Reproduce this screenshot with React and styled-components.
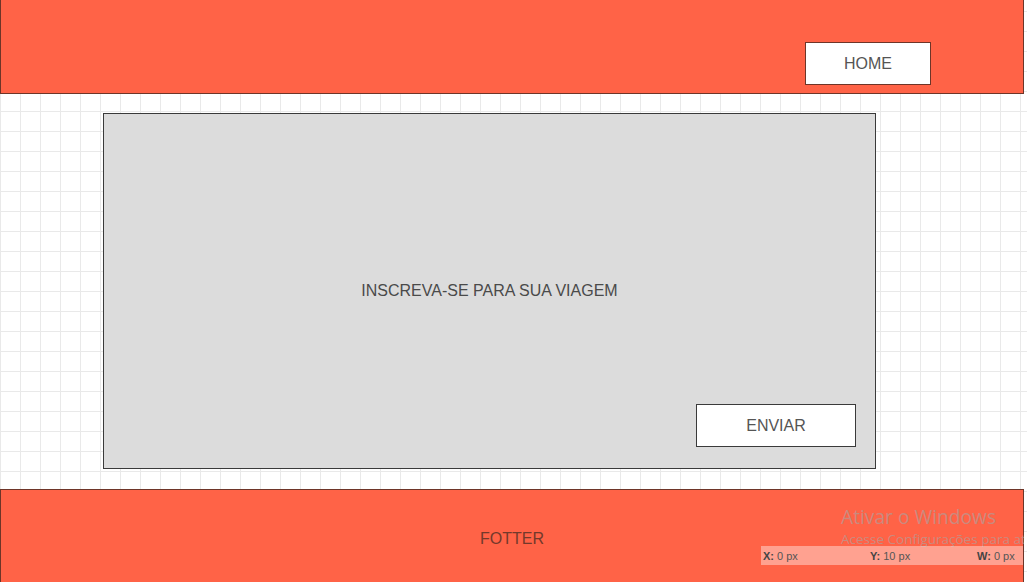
import styled, { createGlobalStyle } from 'styled-components';

const GlobalStyle = createGlobalStyle`
    html, body {
        margin: 0;
        padding: 0;
    }

    body {
        overflow: hidden;
        font-family: "Liberation Sans", Arial, sans-serif;
        background-color: #ffffff;
        background-image:
            linear-gradient(to right, #e9e9e9 1px, transparent 1px),
            linear-gradient(to bottom, #e9e9e9 1px, transparent 1px);
        background-size: 20px 20px;
        background-position: 0 11px;
    }
`;

const Page = styled.div`
    position: relative;
    width: 1024px;
    height: 582px;
    display: flex;
    flex-direction: column;
    overflow: hidden;
`;

const Header = styled.header`
    box-sizing: border-box;
    height: 94px;
    flex-shrink: 0;
    background: #ff6347;
    border: 1px solid #6e3528;
    border-top: none;
    display: flex;
    justify-content: flex-end;
    align-items: flex-end;
    padding: 0 92px 8px 0;
`;

const Button = styled.button`
    box-sizing: border-box;
    width: ${(props) => props.w}px;
    height: 43px;
    background: #ffffff;
    border: 1px solid ${(props) => (props.dark ? '#3a3a3a' : '#6e3528')};
    border-radius: 0;
    font-family: inherit;
    font-size: 16px;
    color: #555555;
    padding: 0;
    cursor: pointer;
`;

const Main = styled.main`
    flex: 1;
    padding: 19px 0 20px 103px;
`;

const Panel = styled.section`
    box-sizing: border-box;
    width: 773px;
    height: 356px;
    background: #dcdcdc;
    border: 1px solid #3a3a3a;
    display: grid;
    grid-template-areas: 'stack';
`;

const Title = styled.p`
    grid-area: stack;
    margin: 0;
    justify-self: center;
    align-self: center;
    font-size: 16px;
    color: #4a4a4a;
`;

const SendArea = styled.div`
    grid-area: stack;
    justify-self: end;
    align-self: end;
    margin: 0 19px 21px 0;
`;

const Footer = styled.footer`
    box-sizing: border-box;
    height: 98px;
    flex-shrink: 0;
    background: #ff6347;
    border: 1px solid #6e3528;
    border-bottom: none;
    display: flex;
    justify-content: center;
    align-items: center;
    font-size: 16px;
    color: #73392b;
`;

const Watermark = styled.div`
    position: absolute;
    left: 841px;
    top: 505px;
    white-space: nowrap;
    font-family: "Open Sans", "Noto Sans", sans-serif;
    color: rgba(165, 165, 165, 0.6);
`;

const WatermarkTitle = styled.div`
    font-size: 19.2px;
    line-height: 24px;
`;

const WatermarkText = styled.div`
    font-size: 13.5px;
    line-height: 20px;
`;

const CoordBar = styled.div`
    position: absolute;
    left: 761px;
    top: 546px;
    width: 262px;
    height: 19px;
    background: rgba(255, 255, 255, 0.4);
    display: flex;
    align-items: center;
    justify-content: space-between;
    padding: 0 8px 0 2px;
    box-sizing: border-box;
    font-size: 11px;
    color: #555555;
`;

const Coord = styled.span`
    width: ${(props) => props.w}px;

    b {
        color: #444444;
    }
`;

const App = () => {
    return (
        <>
            <GlobalStyle />
            <Page>
                <Header>
                    <Button w={126}>HOME</Button>
                </Header>
                <Main>
                    <Panel>
                        <Title>INSCREVA-SE PARA SUA VIAGEM</Title>
                        <SendArea>
                            <Button w={160} dark>ENVIAR</Button>
                        </SendArea>
                    </Panel>
                </Main>
                <Footer>FOTTER</Footer>
                <Watermark>
                    <WatermarkTitle>Ativar o Windows</WatermarkTitle>
                    <WatermarkText>Acesse Configurações para ativar o Windows.</WatermarkText>
                </Watermark>
                <CoordBar>
                    <Coord w={105}><b>X:</b> 0 px</Coord>
                    <Coord w={105}><b>Y:</b> 10 px</Coord>
                    <Coord w={38}><b>W:</b> 0 px</Coord>
                </CoordBar>
            </Page>
        </>
    );
};

export default App;
